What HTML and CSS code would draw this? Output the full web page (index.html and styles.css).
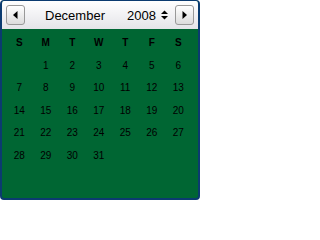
FILE: index.html
```html
<!DOCTYPE html>
<html>
<head>
<meta charset="utf-8">
<link rel="stylesheet" href="styles.css">
</head>
<body>
<div class="cal">
  <div class="head">
    <div class="btn prev"><svg width="5" height="8" viewBox="0 0 5 8"><polygon points="4.5,0 0,4 4.5,8" fill="#000"/></svg></div>
    <span class="month">December</span>
    <span class="year">2008</span>
    <svg class="spin" width="7" height="10" viewBox="0 0 7 10"><polygon points="0,4 3.5,0.5 7,4" fill="#000"/><polygon points="0,6 7,6 3.5,9.5" fill="#000"/></svg>
    <div class="btn next"><svg width="5" height="8" viewBox="0 0 5 8"><polygon points="0.5,0 5,4 0.5,8" fill="#000"/></svg></div>
  </div>
  <div class="grid">
    <div class="dow">S</div><div class="dow">M</div><div class="dow">T</div><div class="dow">W</div><div class="dow">T</div><div class="dow">F</div><div class="dow">S</div>
    <div></div><div>1</div><div>2</div><div>3</div><div>4</div><div>5</div><div>6</div>
    <div>7</div><div>8</div><div>9</div><div>10</div><div>11</div><div>12</div><div>13</div>
    <div>14</div><div>15</div><div>16</div><div>17</div><div>18</div><div>19</div><div>20</div>
    <div>21</div><div>22</div><div>23</div><div>24</div><div>25</div><div>26</div><div>27</div>
    <div>28</div><div>29</div><div>30</div><div>31</div>
  </div>
</div>
</body>
</html>
```
FILE: styles.css
```css
html, body {
  margin: 0;
  padding: 0;
  background: #fff;
}
.cal {
  width: 200px;
  height: 200px;
  box-sizing: border-box;
  border: 2px solid #0b3b70;
  border-top-width: 1px;
  border-radius: 4px;
  background: #006633;
  overflow: hidden;
  font-family: "Liberation Sans", Arial, sans-serif;
}
.head {
  height: 28px;
  display: flex;
  align-items: center;
  background: linear-gradient(#ffffff, #e4e4e8);
}
.btn {
  width: 19px;
  height: 20px;
  box-sizing: border-box;
  border: 1px solid #999;
  border-radius: 3px;
  background: linear-gradient(#ffffff, #dcdcdc);
  display: flex;
  align-items: center;
  justify-content: center;
}
.prev {
  margin-left: 4px;
}
.next {
  margin-left: 7px;
}
.month {
  margin-left: 20px;
  font-size: 13px;
  color: #000;
}
.year {
  margin-left: auto;
  font-size: 13px;
  color: #000;
}
.spin {
  margin-left: 5px;
}
.next {
  margin-right: 4px;
}
.grid {
  margin-left: 4px;
  padding-top: 3px;
  display: grid;
  grid-template-columns: repeat(7, 26.5px);
  grid-auto-rows: 22.6px;
  font-size: 10px;
  line-height: 22.6px;
  color: #000;
  text-align: center;
}
.dow {
  font-weight: bold;
}
```
